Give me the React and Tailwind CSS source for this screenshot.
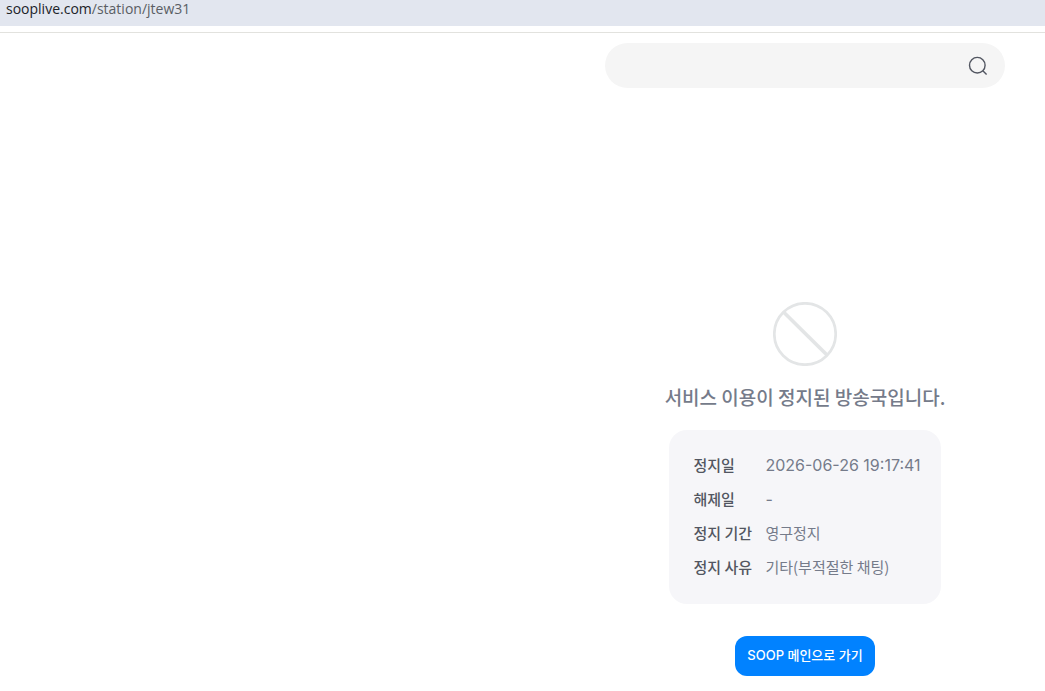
const details = [
  { label: '정지일', value: '2026-06-26 19:17:41', numeric: true },
  { label: '해제일', value: '-', numeric: true },
  { label: '정지 기간', value: '영구정지' },
  { label: '정지 사유', value: '기타(부적절한 채팅)' },
];

function AddressBar() {
  return (
    <div className="border-b border-[#e2e2de] bg-white pb-1.5">
      <div className="h-[26px] bg-[#e2e6ef] px-1.5 font-['Open_Sans','Noto_Sans',sans-serif] text-[14px] leading-[18px] text-[#5a5e64]">
        <span className="text-[#202328]">sooplive.com</span>/station/jtew31
      </div>
    </div>
  );
}

function SearchForm() {
  return (
    <form
      role="search"
      onSubmit={(e) => e.preventDefault()}
      className="flex h-[45px] w-full max-w-[400px] items-center rounded-full bg-[#f5f5f5] pr-[15px] pl-5"
    >
      <input type="search" aria-label="검색" className="min-w-0 flex-1 bg-transparent text-[15px] outline-none" />
      <button type="submit" aria-label="검색" className="flex size-6 items-center justify-center">
        <svg viewBox="0 0 24 24" className="size-6" fill="none" stroke="#525661" strokeWidth="1.4" aria-hidden="true">
          <circle cx="11.3" cy="11.2" r="7.8" />
          <path d="M16.8 16.7 20.6 20.5" />
        </svg>
      </button>
    </form>
  );
}

function BlockedIcon() {
  return (
    <svg viewBox="0 0 64 64" className="size-16" fill="none" stroke="#e3e5e6" aria-hidden="true">
      <circle cx="32" cy="32" r="30.7" strokeWidth="2.7" />
      <path d="M11 10.5 54 53" strokeWidth="3.6" />
    </svg>
  );
}

export default function App() {
  return (
    <div className="min-h-screen bg-white font-[Inter,'Noto_Sans_CJK_KR',sans-serif]">
      <AddressBar />
      <div className="ml-auto flex w-full max-w-[480px] flex-col items-center px-10 pt-2.5 pb-4">
        <SearchForm />
        <main className="mt-[214px] flex flex-col items-center">
          <BlockedIcon />
          <h1 className="mt-[17px] font-['Noto_Sans_CJK_KR',sans-serif] text-[19px] leading-7 font-medium whitespace-nowrap text-[#757b8a]">
            서비스 이용이 정지된 방송국입니다.
          </h1>
          <dl className="mt-[19px] grid grid-cols-[60px_auto] gap-x-3 gap-y-3 rounded-[18px] bg-[#f6f6f9] pt-6 pr-5 pb-[26px] pl-6 text-[15px] leading-[22px]">
            {details.map(({ label, value, numeric }) => (
              <div key={label} className="contents">
                <dt className="font-['Noto_Sans_CJK_KR',sans-serif] font-medium whitespace-nowrap text-[#525661]">{label}</dt>
                <dd
                  className={
                    numeric
                      ? 'text-[16px] whitespace-nowrap text-[#757b8a]'
                      : "font-['Noto_Sans_CJK_KR',sans-serif] whitespace-nowrap text-[#757b8a]"
                  }
                >
                  {value}
                </dd>
              </div>
            ))}
          </dl>
          <a
            href="#main"
            className="mt-8 flex h-10 items-center rounded-xl bg-[#0182ff] px-3 text-[13px] font-medium whitespace-nowrap text-white"
          >
            SOOP 메인으로 가기
          </a>
        </main>
      </div>
    </div>
  );
}
